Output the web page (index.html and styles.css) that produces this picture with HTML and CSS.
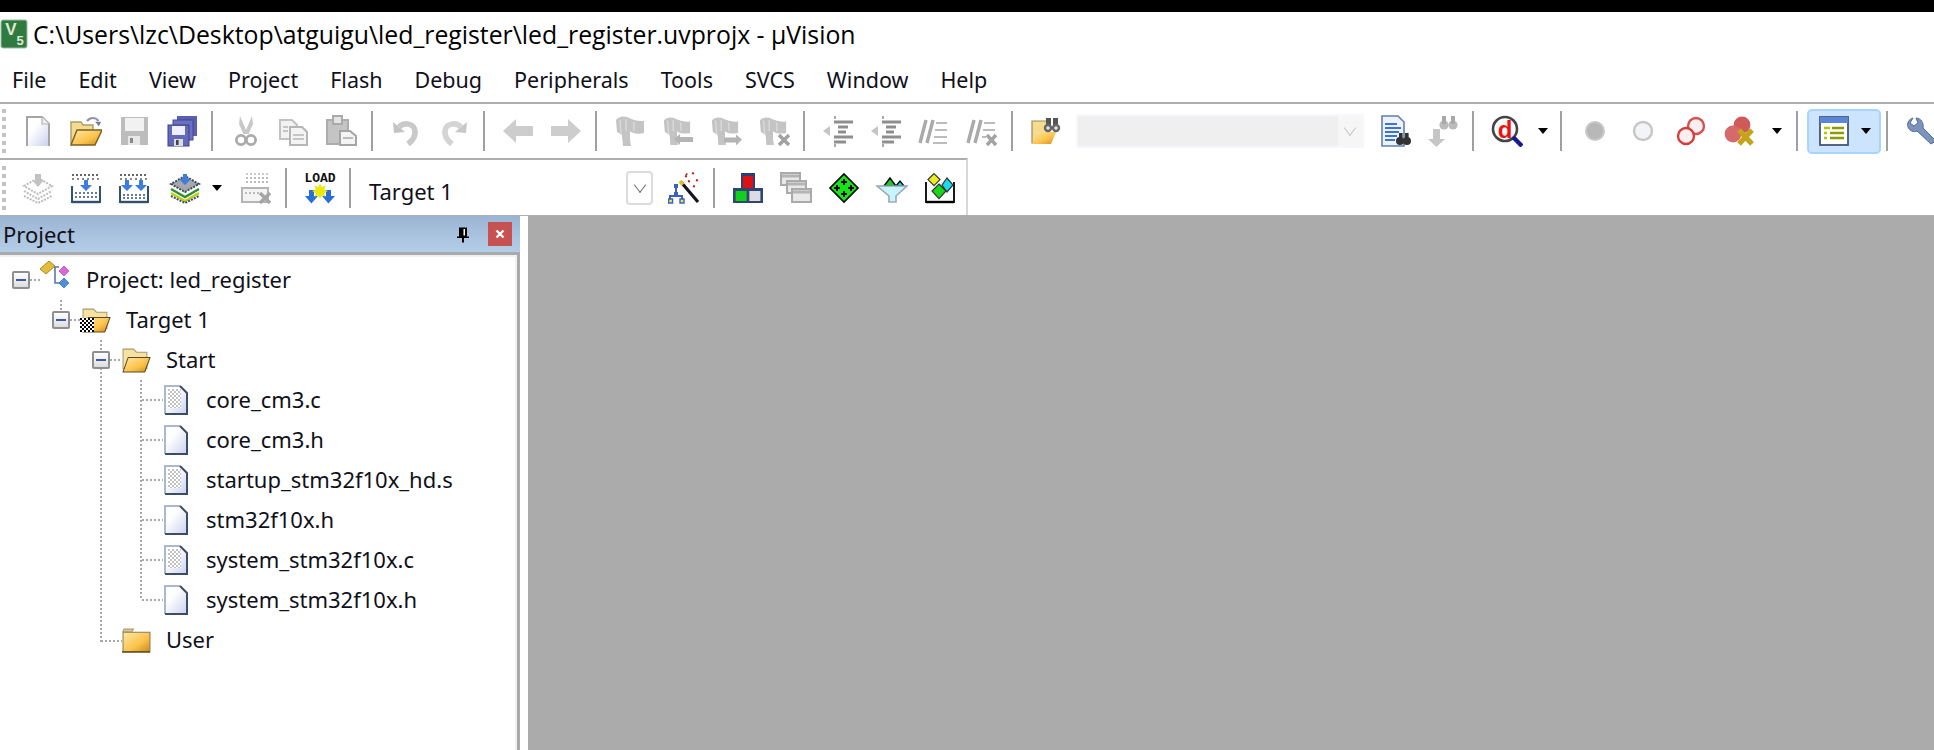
FILE: index.html
```html
<!DOCTYPE html>
<html lang="en">
<head>
  <meta charset="UTF-8">
  <title>led_register.uvprojx - µVision</title>
  <link rel="stylesheet" href="styles.css">
</head>
<body>
  <!-- shared icons, 16 unit grid like the original bitmaps -->
  <svg class="icon-defs" xmlns="http://www.w3.org/2000/svg">
    <defs>
      <linearGradient id="g-page" x1="0" y1="0" x2="1" y2="1"><stop offset=".35" stop-color="#fff"/><stop offset="1" stop-color="#c9d0ee"/></linearGradient>
      <linearGradient id="g-folder" x1="0" y1="0" x2="1" y2="1"><stop offset="0" stop-color="#fde9a8"/><stop offset=".6" stop-color="#fbc24a"/><stop offset="1" stop-color="#c98a1c"/></linearGradient>

      <symbol id="i-new" viewBox="0 0 16 16"><path d="M2.500 1H10l3.500 3.500V15.500h-11z" fill="url(#g-page)"/><path d="M2.500 15.500V1H10l3.500 3.500v11" fill="none" stroke="#a5a5a5"/><path d="M10 1v3.500h3.500" fill="#eee" stroke="#b5b5b5" stroke-width=".6"/></symbol>
      <symbol id="i-open" viewBox="0 0 16 16"><path d="M.5 3.500h5l1 1.500h5v9H.5z" fill="#f3dc92" stroke="#ac9c68" stroke-width=".7"/><path d="M3.500 7.500H16L12.500 15H.5z" fill="url(#g-folder)" stroke="#7c5f22" stroke-width=".7"/><path d="M8.500 3C10 1 13 1 14.200 3" fill="none" stroke="#8f95a8" stroke-width="1.100"/><path d="M12.600 3.400h3L14.400 5.600z" fill="#6f7f9c"/></symbol>
      <symbol id="i-save" viewBox="0 0 16 16"><rect x="1.500" y="1" width="13.500" height="14" fill="#bdbdbd"/><rect x="3.500" y="1.500" width="9.500" height="6.500" fill="#f1f1f1"/><rect x="5" y="10.500" width="6" height="4.500" fill="#e8e8e8"/><rect x="6" y="11.500" width="1.500" height="2.500" fill="#888"/></symbol>
      <symbol id="i-saveall" viewBox="0 0 16 16"><rect x="5.500" y=".5" width="10" height="10" fill="#5a5fb0"/><rect x="3.500" y="2.500" width="10" height="10" fill="#6c70c0" stroke="#43468f" stroke-width=".5"/><rect x="1" y="5" width="10.500" height="10.500" fill="#6468b8" stroke="#3c3f88" stroke-width=".5"/><rect x="3" y="5.500" width="6.500" height="4.500" fill="#eef"/><rect x="4" y="12" width="4.500" height="3.500" fill="#ddd"/><rect x="5" y="12.500" width="1.300" height="2.500" fill="#444"/></symbol>
      <symbol id="i-cut" viewBox="0 0 16 16"><path d="M5 .5l3 7 3-7 .5 4-2.200 5H6.700L4.500 4.500z" fill="#c8c8c8"/><circle cx="5.500" cy="12.500" r="2.300" fill="none" stroke="#aaa" stroke-width="1.400"/><circle cx="10.500" cy="12.500" r="2.300" fill="none" stroke="#aaa" stroke-width="1.400"/></symbol>
      <symbol id="i-copy" viewBox="0 0 16 16"><path d="M1 2.500h6L9.500 5v7H1z" fill="#f2f2f2" stroke="#c2c2c2"/><path d="M6 6h6l2.500 2.500V15H6z" fill="#f4f4f4" stroke="#b5b5b5"/><path d="M7.500 10H13M7.500 12H13M2.500 6H5M2.500 8H5" stroke="#c5c5c5"/></symbol>
      <symbol id="i-paste" viewBox="0 0 16 16"><rect x=".5" y="2.500" width="10.500" height="12" fill="#c4c4c4" stroke="#adadad"/><rect x="3.500" y=".5" width="4.500" height="4" fill="#e4e4e4" stroke="#aaa"/><path d="M7 8h5l3 2.500V15H7z" fill="#f4f4f4" stroke="#a5a5a5"/><path d="M8.500 11.500h5" stroke="#bbb"/></symbol>
      <symbol id="i-undo" viewBox="0 0 16 16"><path d="M4.500 6C7 3.500 12 4 12.500 8c.3 2.500-1.500 5-3.500 6.500" fill="none" stroke="#c9c9c9" stroke-width="2.800"/><path d="M1.500 3.500L2 9l5.500-.5z" fill="#c4c4c4"/></symbol>
      <symbol id="i-redo" viewBox="0 0 16 16"><path d="M11.500 6C9 3.500 4 4 3.500 8c-.3 2.500 1.500 5 3.500 6.500" fill="none" stroke="#d4d4d4" stroke-width="2.800"/><path d="M14.500 3.500L14 9l-5.500-.5z" fill="#c8c8c8"/></symbol>
      <symbol id="i-back" viewBox="0 0 16 16"><path d="M.5 8L7 2v3.500h8.500v5H7V14z" fill="#cdcdcd"/></symbol>
      <symbol id="i-fwd" viewBox="0 0 16 16"><path d="M15.500 8L9 2v3.500H.5v5H9V14z" fill="#cdcdcd"/></symbol>
      <symbol id="i-flag" viewBox="0 0 16 16"><path d="M1 2.500C2 .8 5 .3 7 1.300c2 1 5 2 8 1.700v6c-2 .8-5 .3-7-.8V12l.5 3.500h-4L4 10 1.500 8.500z" fill="#c4c4c4"/><path d="M3 2.500l.5 7M6 2V8M10 3.500V8" stroke="#d8d8d8" stroke-width=".8"/></symbol>
      <symbol id="i-flagl" viewBox="0 0 16 16"><use href="#i-flag" width="15" height="16"/><path d="M6 12l3-2.500V11h6.500v2.500H9V15z" fill="#b4b4b4"/></symbol>
      <symbol id="i-flagr" viewBox="0 0 16 16"><use href="#i-flag" width="15" height="16"/><path d="M16 12.300l-3-2.500v1.500H7v2.500h6v1.500z" fill="#b4b4b4"/></symbol>
      <symbol id="i-flagx" viewBox="0 0 16 16"><use href="#i-flag" width="15" height="16"/><path d="M10.500 10l5 5M15.500 10l-5 5" stroke="#a2a2a2" stroke-width="1.800"/></symbol>
      <symbol id="i-indent" viewBox="0 0 16 16"><path d="M6 3.500h9.500M8 6h5M8 8.500h4M6 11h9.500M6 13.500h6" stroke="#8e8e8e" stroke-width="1.500"/><path d="M.5 8L4 5.500v5z" fill="#c5c5c5"/><path d="M6.500 .5V2M6.500 14.500V16" stroke="#aaa"/></symbol>
      <symbol id="i-comment" viewBox="0 0 16 16"><path d="M1 14L4 2.500M4.500 14L7.500 2.500" stroke="#aaa" stroke-width="1.700"/><path d="M9 4h5.500M8.500 7.500h6M8 11h6.500M7.500 14h7" stroke="#bcbcbc"/></symbol>
      <symbol id="i-uncomment" viewBox="0 0 16 16"><path d="M1 14L4 2.500M4.500 14L7.500 2.500" stroke="#aaa" stroke-width="1.700"/><path d="M9 4h5.500M8.500 7.500h6M8 11h2" stroke="#bcbcbc"/><path d="M10.500 10l4.500 5M15 10l-4.500 5" stroke="#a4a4a4" stroke-width="1.700"/></symbol>
      <symbol id="i-findfolder" viewBox="0 0 16 16"><path d="M1 3h8v11H1z" fill="#f4dc8c" stroke="#9c8c5c" stroke-width=".6"/><path d="M3.500 8.500H13L10.500 14.500H1z" fill="url(#g-folder)"/><path d="M8 1.500h2.500V6H8zM11.500 1.500H14V6h-2.500z" fill="#555"/><circle cx="9" cy="6.500" r="2.100" fill="#666"/><circle cx="13" cy="6.500" r="2.100" fill="#666"/><circle cx="9" cy="6.500" r=".9" fill="#e4e4e4"/><circle cx="13" cy="6.500" r=".9" fill="#e4e4e4"/></symbol>
      <symbol id="i-finddoc" viewBox="0 0 16 16"><path d="M1.500 .5h8l3 3v12h-11z" fill="#eef2fb" stroke="#5f7fae" stroke-width=".8"/><path d="M3 4.500h6M3 6.500h8M3 8.500h7M3 10.500h6M3 12.500h5" stroke="#3b73d6"/><circle cx="10.500" cy="13" r="2" fill="#333"/><circle cx="14" cy="13" r="2" fill="#333"/><rect x="10" y="9" width="1.800" height="3" fill="#333"/><rect x="13" y="9" width="1.800" height="3" fill="#333"/></symbol>
      <symbol id="i-finddown" viewBox="0 0 16 16"><path d="M3 7h3.500v5H9l-4.300 4L.5 12H3z" fill="#c6c6c6"/><circle cx="8.500" cy="5" r="2.300" fill="#bbb"/><circle cx="13" cy="5" r="2.300" fill="#bbb"/><rect x="7.500" y=".5" width="2" height="4" fill="#a8a8a8"/><rect x="12" y=".5" width="2" height="4" fill="#a8a8a8"/></symbol>
      <symbol id="i-debug" viewBox="0 0 16 16"><circle cx="7" cy="7" r="6" fill="#fff" stroke="#444" stroke-width="1.300"/><text x="7" y="11.500" class="svg-d" text-anchor="middle">d</text><path d="M11 11l4.500 4.500" stroke="#1a1a90" stroke-width="2.200"/></symbol>
      <symbol id="i-dot" viewBox="0 0 16 16"><circle cx="8" cy="8" r="4.500" fill="#b8b8b8" stroke="#c8c8c8"/></symbol>
      <symbol id="i-ring" viewBox="0 0 16 16"><circle cx="8" cy="8" r="4.500" fill="#f2f4f8" stroke="#c6c6c6" stroke-width="1.200"/></symbol>
      <symbol id="i-rings" viewBox="0 0 16 16"><circle cx="10.500" cy="5.500" r="4" fill="#fbeeee" stroke="#d75050" stroke-width="1.200"/><circle cx="5.500" cy="10.500" r="4" fill="#fbf0f0" stroke="#d23f3f" stroke-width="1.200"/></symbol>
      <symbol id="i-ringsx" viewBox="0 0 16 16"><circle cx="9.500" cy="5" r="4.200" fill="#cf5a5a"/><circle cx="5" cy="9.500" r="4.200" fill="#d66a6a"/><path d="M8 7.500l6.500 7M14.500 7.500L8 14.500" stroke="#c6a418" stroke-width="2.600"/></symbol>
      <symbol id="i-window" viewBox="0 0 16 16"><rect x="1" y="1" width="14" height="14" fill="#fff" stroke="#445577" stroke-width=".9"/><rect x="1" y="1" width="14" height="3" fill="#5a86d8"/><path d="M3 6.500h3M3 9h1.500M3 11.500h1.500" stroke="#b9c400" stroke-width="1.200"/><path d="M6 9h7M6 11.500h7M7 6.500h6" stroke="#8f9a00" stroke-width="1.200"/></symbol>
      <symbol id="i-wrench" viewBox="0 0 16 16"><path d="M4 1.500C2 2 .8 4 1.500 6s3 2.800 4.500 2l7 6.500 2.500-1.500L9 6.500C9.500 4 8 1.500 5.500 1.500L6.500 4 4.500 5.500 2.500 4z" fill="#7b93bd" stroke="#566a92" stroke-width=".5"/></symbol>

      <symbol id="i-translate" viewBox="0 0 16 16"><g fill="none" stroke="#bdbdbd" stroke-dasharray="1 .6"><path d="M1 7l7-4 7 4-7 4z"/><path d="M1 9.500l7 4 7-4M1 12l7 3.500 7-3.500"/></g><path d="M6.500 1h3v3H11L8 7.500 5 4h1.500z" fill="#c2c2c2"/></symbol>
      <symbol id="i-build" viewBox="0 0 16 16"><path d="M1 1.500h14" stroke="#666" stroke-dasharray="1 1"/><path d="M1 3.500h14" stroke="#888" stroke-dasharray="1 1.500"/><path d="M1 7v8h14V7" fill="#fff" stroke="#34506f"/><path d="M1 15h14" stroke="#34506f" stroke-width="1.200"/><path d="M2.500 10.500h11M2.500 12.500h11" stroke="#667b95" stroke-dasharray="1 1"/><path d="M7 4h2v2.500h2L8 9.500 5 6.500h2z" fill="#3d7de0"/></symbol>
      <symbol id="i-rebuild" viewBox="0 0 16 16"><path d="M1 1.500h14" stroke="#666" stroke-dasharray="1 1"/><path d="M1 3.500h14" stroke="#888" stroke-dasharray="1 1.500"/><path d="M1 7v8h14V7" fill="#fff" stroke="#34506f"/><path d="M1 15h14" stroke="#34506f" stroke-width="1.200"/><path d="M2.500 11.500h11M2.500 13h11" stroke="#667b95" stroke-dasharray="1 1"/><path d="M3.500 4h2v2.500h2L4.500 9.500 1.500 6.500h2zM10.500 4h2v2.500h2l-3 3-3-3h2z" fill="#3d7de0"/></symbol>
      <symbol id="i-batch" viewBox="0 0 16 16"><path d="M1 6l7 4 7-4-7-4z" fill="#a8a8a8" stroke="#3a4c62" stroke-dasharray="1 .6"/><path d="M1 8.500l7 4 7-4" fill="none" stroke="#2f8f2f" stroke-width="1.200"/><path d="M1 10.500l7 4 7-4" fill="none" stroke="#c6cc10" stroke-width="1.200"/><path d="M1 12l7 3.500 7-3.500" fill="none" stroke="#34506f" stroke-dasharray="1 .6"/><path d="M7 1h2v2.500h2L8 6.500 5 3.500h2z" fill="#3d7de0"/></symbol>
      <symbol id="i-stop" viewBox="0 0 16 16"><path d="M3 1h11" stroke="#ccc" stroke-dasharray="1 1"/><path d="M3 3h11M3 5h11" stroke="#bbb" stroke-dasharray="1 1"/><path d="M1 8v7h13V8z" fill="#f4f4f4" stroke="#b4b4b4"/><path d="M2.500 10.500h8" stroke="#bbb" stroke-dasharray="1 1"/><path d="M10 10.500l5 5M15 10.500l-5 5" stroke="#a5a5a5" stroke-width="1.700"/></symbol>
      <symbol id="i-load" viewBox="0 0 16 16"><text x="8" y="5" class="svg-load" text-anchor="middle">LOAD</text><path d="M2.500 9H5v3h2l-3.300 3.800L.5 12h2zM11 9h2.500v3h2l-3.300 3.800L9 12h2z" fill="#2a6fd8"/><path d="M8 5.800l1 1.700 1.800-.7-.7 1.800 1.700 1-1.700 1 .7 1.800-1.800-.7-1 1.700-1-1.700-1.800.7.700-1.800-1.700-1 1.700-1-.7-1.800 1.800.7z" fill="#eaea10"/></symbol>
      <symbol id="i-wizard" viewBox="0 0 16 16"><path d="M6.500 5L15 15" stroke="#15151f" stroke-width="1.600"/><path d="M6 4.500l1.500 1.800" stroke="#e0c020" stroke-width="1.800"/><path d="M8.500 2l1 .3M12 .5l1 .3M10 4.500l1 .3M14 4l1 .3M12.500 7l1 .3M9 .8l.6.6" stroke="#b02020"/><path d="M4 7v5M1 15v-3h6v3" fill="none" stroke="#3a60c0"/><path d="M3 6h2v2H3zM3 10h2v2H3z" fill="#3a60c0"/><path d="M.3 13.500h2v2h-2zM6 13.500h2v2H6z" fill="#f2e54a" stroke="#3a60c0" stroke-width=".7"/></symbol>
      <symbol id="i-rte" viewBox="0 0 16 16"><rect x="4.500" y=".5" width="7" height="7.500" fill="#2a3f7a"/><rect x="5.500" y="2" width="5" height="6" fill="#e01010"/><rect x=".5" y="8" width="15" height="7.500" fill="#30456f"/><rect x="1.800" y="9.500" width="5.500" height="5" fill="#12d01a"/><rect x="8.700" y="9.500" width="5.500" height="5" fill="#dcdce4"/></symbol>
      <symbol id="i-windows" viewBox="0 0 16 16"><g fill="#e8e8e8" stroke="#aaa"><rect x=".5" y=".5" width="9.500" height="6"/><rect x="3.500" y="4.500" width="9.500" height="6"/><rect x="6" y="8.500" width="9.500" height="6.500"/></g><path d="M1 2h8.500M4 6h8.500M6.500 10H15" stroke="#b4b4b4" stroke-width="1.500"/></symbol>
      <symbol id="i-diamond" viewBox="0 0 16 16"><path d="M8 1l7 7-7 7-7-7z" fill="#12e812" stroke="#000" stroke-width=".8"/><path d="M8 3.500v3M6.500 5h3M4.500 6.500v3M3 8h3M11.500 6.500v3M10 8h3M8 9.500v3M6.500 11h3" stroke="#000"/></symbol>
      <symbol id="i-funnel" viewBox="0 0 16 16"><path d="M4 7l3-4 3 4z" fill="#12d020" stroke="#000" stroke-width=".7"/><path d="M10 7l2-2.500L14 7z" fill="#18e0f0" stroke="#000" stroke-width=".7"/><path d="M.5 7h15L10 12v3H6.500v-3z" fill="#c8f4fb" stroke="#9aa8b4" stroke-width=".8"/></symbol>
      <symbol id="i-book" viewBox="0 0 16 16"><path d="M1 5v10h14V5" fill="#fff" stroke="#000" stroke-width=".9"/><path d="M1 15h14" stroke="#000" stroke-width="1.200"/><path d="M5 .8l3 3-3 3-3-3z" fill="#ecec20" stroke="#333" stroke-width=".6"/><path d="M11.500 3l3 3.500-3 3.500L9 6.500z" fill="#18dcf0" stroke="#333" stroke-width=".6"/><path d="M7.500 6L11 9.500l-3.500 3.800L4 9.500z" fill="#18d818" stroke="#333" stroke-width=".6"/></symbol>

      <symbol id="i-project" viewBox="0 0 30 30"><path d="M13 6h6M15 6v16h6" fill="none" stroke="#5a78a8" stroke-width="1.600"/><path d="M0 8l9-8 6 5-9 8z" fill="#e4bb3c" stroke="#a98a20"/><path d="M19 10l5-5 5 5-5 5z" fill="#dd66dd" stroke="#a040a0" stroke-dasharray="1 .5"/><path d="M19 22l5-5 5 5-5 5z" fill="#4a90dc" stroke="#2a60b0" stroke-dasharray="1 .5"/></symbol>
      <symbol id="i-folderopen" viewBox="0 0 28 24"><path d="M1 1h10l3 3h10v16H1z" fill="#f5e2a2" stroke="#a89a70"/><path d="M6 9h21l-5 14H1z" fill="url(#g-folder)" stroke="#5e4a22"/></symbol>
      <symbol id="i-folder" viewBox="0 0 28 24"><path d="M1 3h9l1-2H2z" fill="#eadca8" stroke="#a89a70"/><path d="M1 4h26v19H1z" fill="url(#g-folder)" stroke="#8c7c4c"/><path d="M0 23h27" stroke="#5e4a22" stroke-width="1.400"/></symbol>
      <symbol id="i-file" viewBox="0 0 24 30"><path d="M1 1h15l7 7v21H1z" fill="url(#g-page)"/><path d="M1 29V1h15" fill="none" stroke="#a7b8d0" stroke-width="2"/><path d="M16 1l7 7v21H1" fill="none" stroke="#3c4d68" stroke-width="2"/></symbol>
      <pattern id="p-check" width="4" height="4" patternUnits="userSpaceOnUse"><rect width="4" height="4" fill="#fff"/><rect width="2" height="2" fill="#c4c4c4"/><rect x="2" y="2" width="2" height="2" fill="#c4c4c4"/></pattern>
      <pattern id="p-target" width="4" height="4" patternUnits="userSpaceOnUse"><rect width="4" height="4" fill="#fff"/><rect width="2" height="2" fill="#000"/><rect x="2" y="2" width="2" height="2" fill="#000"/></pattern>
      <symbol id="i-filec" viewBox="0 0 24 30"><use href="#i-file" width="24" height="30"/><rect x="4" y="4" width="13" height="19" fill="url(#p-check)"/></symbol>
    </defs>
  </svg>

  <div class="app">
    <header class="titlebar">
      <svg class="app-icon" viewBox="0 0 28 30">
        <rect x="1" y="1" width="26" height="28" rx="2" fill="#2f7a3e" stroke="#9dbda5"/>
        <text x="11" y="16" class="svg-logo">V</text>
        <text x="20" y="26" class="svg-logo-small">5</text>
      </svg>
      <span class="title-text">C:\Users\lzc\Desktop\atguigu\led_register\led_register.uvprojx - µVision</span>
    </header>

    <nav class="menubar">
      <span>File</span><span>Edit</span><span>View</span><span>Project</span><span>Flash</span><span>Debug</span><span>Peripherals</span><span>Tools</span><span>SVCS</span><span>Window</span><span>Help</span>
    </nav>

    <div class="toolbar">
      <span class="grip"></span>
      <span class="tool"><svg class="ic"><use href="#i-new"/></svg></span>
      <span class="tool"><svg class="ic"><use href="#i-open"/></svg></span>
      <span class="tool"><svg class="ic"><use href="#i-save"/></svg></span>
      <span class="tool"><svg class="ic"><use href="#i-saveall"/></svg></span>
      <span class="sep"></span>
      <span class="tool"><svg class="ic"><use href="#i-cut"/></svg></span>
      <span class="tool"><svg class="ic"><use href="#i-copy"/></svg></span>
      <span class="tool"><svg class="ic"><use href="#i-paste"/></svg></span>
      <span class="sep"></span>
      <span class="tool"><svg class="ic"><use href="#i-undo"/></svg></span>
      <span class="tool"><svg class="ic"><use href="#i-redo"/></svg></span>
      <span class="sep"></span>
      <span class="tool"><svg class="ic"><use href="#i-back"/></svg></span>
      <span class="tool"><svg class="ic"><use href="#i-fwd"/></svg></span>
      <span class="sep"></span>
      <span class="tool"><svg class="ic"><use href="#i-flag"/></svg></span>
      <span class="tool"><svg class="ic"><use href="#i-flagl"/></svg></span>
      <span class="tool"><svg class="ic"><use href="#i-flagr"/></svg></span>
      <span class="tool"><svg class="ic"><use href="#i-flagx"/></svg></span>
      <span class="sep"></span>
      <span class="tool"><svg class="ic"><use href="#i-indent"/></svg></span>
      <span class="tool"><svg class="ic"><use href="#i-indent"/></svg></span>
      <span class="tool"><svg class="ic"><use href="#i-comment"/></svg></span>
      <span class="tool"><svg class="ic"><use href="#i-uncomment"/></svg></span>
      <span class="sep"></span>
      <span class="tool"><svg class="ic"><use href="#i-findfolder"/></svg></span>
      <span class="find-box"><span class="find-btn"><i class="chevron light"></i></span></span>
      <span class="tool after-box"><svg class="ic"><use href="#i-finddoc"/></svg></span>
      <span class="tool"><svg class="ic"><use href="#i-finddown"/></svg></span>
      <span class="sep"></span>
      <span class="tool"><svg class="ic"><use href="#i-debug"/></svg></span>
      <span class="drop-slot"><i class="drop"></i></span>
      <span class="sep"></span>
      <span class="tool"><svg class="ic"><use href="#i-dot"/></svg></span>
      <span class="tool"><svg class="ic"><use href="#i-ring"/></svg></span>
      <span class="tool"><svg class="ic"><use href="#i-rings"/></svg></span>
      <span class="tool"><svg class="ic"><use href="#i-ringsx"/></svg></span>
      <span class="drop-slot wide"><i class="drop"></i></span>
      <span class="sep"></span>
      <span class="tool-active"><svg class="ic"><use href="#i-window"/></svg><i class="drop"></i></span>
      <span class="sep"></span>
      <span class="tool"><svg class="ic"><use href="#i-wrench"/></svg></span>
    </div>

    <div class="toolbar second">
      <span class="grip"></span>
      <span class="tool"><svg class="ic"><use href="#i-translate"/></svg></span>
      <span class="tool"><svg class="ic"><use href="#i-build"/></svg></span>
      <span class="tool"><svg class="ic"><use href="#i-rebuild"/></svg></span>
      <span class="tool batch"><svg class="ic"><use href="#i-batch"/></svg></span>
      <span class="drop-slot narrow"><i class="drop"></i></span>
      <span class="tool stop"><svg class="ic"><use href="#i-stop"/></svg></span>
      <span class="sep"></span>
      <span class="tool"><svg class="ic"><use href="#i-load"/></svg></span>
      <span class="sep"></span>
      <span class="target-select"><span class="target-name">Target 1</span><span class="target-btn"><i class="chevron"></i></span></span>
      <span class="tool after-box"><svg class="ic"><use href="#i-wizard"/></svg></span>
      <span class="sep"></span>
      <span class="tool"><svg class="ic"><use href="#i-rte"/></svg></span>
      <span class="tool"><svg class="ic"><use href="#i-windows"/></svg></span>
      <span class="tool"><svg class="ic"><use href="#i-diamond"/></svg></span>
      <span class="tool"><svg class="ic"><use href="#i-funnel"/></svg></span>
      <span class="tool"><svg class="ic"><use href="#i-book"/></svg></span>
    </div>

    <main class="workarea">
      <section class="panel">
        <div class="panel-head">
          <span>Project</span>
          <svg class="pin" viewBox="0 0 14 16"><path d="M3 1h8v9H3zM1 10h12v1.500H1zM6 11.500h2V16H6z" fill="#000"/><rect x="7.500" y="2.500" width="1.500" height="6.500" fill="#fff"/></svg>
          <span class="close-btn"><svg viewBox="0 0 10 10"><path d="M1.500 1.500l7 7M8.500 1.500l-7 7" stroke="#fff" stroke-width="2.400"/></svg></span>
        </div>
        <div class="panel-body">
          <div class="tree">
            <!-- dotted tree guides, drawn over the rows -->
            <svg class="guides" width="500" height="400">
              <path d="M30 25H40M61 45V57M70 65H80M101 85V97M101 113V387M110 105H120M141 125V345M142 145H163M142 185H163M142 225H163M142 265H163M142 305H163M142 345H163M101 386H122"/>
            </svg>
            <div class="row lv0"><span class="exp"></span><span class="node"><svg class="node-project"><use href="#i-project"/></svg></span><span>Project: led_register</span></div>
            <div class="row lv1"><span class="exp"></span><span class="node"><svg class="node-folder"><use href="#i-folderopen"/></svg><svg class="target-mark" viewBox="0 0 14 14"><rect width="14" height="14" fill="url(#p-target)"/></svg></span><span>Target 1</span></div>
            <div class="row lv2"><span class="exp"></span><span class="node"><svg class="node-folder"><use href="#i-folderopen"/></svg></span><span>Start</span></div>
            <div class="row lv3"><span class="exp none"></span><span class="node"><svg class="node-file"><use href="#i-filec"/></svg></span><span>core_cm3.c</span></div>
            <div class="row lv3"><span class="exp none"></span><span class="node"><svg class="node-file"><use href="#i-file"/></svg></span><span>core_cm3.h</span></div>
            <div class="row lv3"><span class="exp none"></span><span class="node"><svg class="node-file"><use href="#i-filec"/></svg></span><span>startup_stm32f10x_hd.s</span></div>
            <div class="row lv3"><span class="exp none"></span><span class="node"><svg class="node-file"><use href="#i-file"/></svg></span><span>stm32f10x.h</span></div>
            <div class="row lv3"><span class="exp none"></span><span class="node"><svg class="node-file"><use href="#i-filec"/></svg></span><span>system_stm32f10x.c</span></div>
            <div class="row lv3"><span class="exp none"></span><span class="node"><svg class="node-file"><use href="#i-file"/></svg></span><span>system_stm32f10x.h</span></div>
            <div class="row lv2"><span class="exp none"></span><span class="node"><svg class="node-folder"><use href="#i-folder"/></svg></span><span>User</span></div>
          </div>
        </div>
      </section>
      <div class="gutter"></div>
      <div class="workspace"></div>
    </main>
  </div>
</body>
</html>
```

FILE: styles.css
```css
html, body {
  margin: 0;
  padding: 0;
  height: 100%;
  overflow: hidden;
  background: #fff;
}
body {
  font-family: "Noto Sans", sans-serif;
  font-size: 22px;
  color: #10101a;
}
.icon-defs {
  position: absolute;
  width: 0;
  height: 0;
}
.app {
  display: flex;
  flex-direction: column;
  height: 750px;
  border-top: 12px solid #000;
  box-sizing: border-box;
}

/* title + menu */
.titlebar {
  display: flex;
  align-items: center;
  height: 43px;
  flex: none;
}
.app-icon {
  width: 28px;
  height: 30px;
  margin: 0 5px 0 0;
  flex: none;
}
.title-text {
  font-family: "Open Sans", sans-serif;
  font-size: 24.8px;
  color: #000;
  white-space: nowrap;
}
.menubar {
  display: flex;
  align-items: center;
  gap: 32px;
  box-sizing: border-box;
  height: 47px;
  padding: 2px 0 0 12px;
  flex: none;
  font-size: 21.5px;
}

/* toolbars */
.toolbar {
  display: flex;
  align-items: center;
  height: 54px;
  flex: none;
  border-top: 2px solid #aeaeae;
  overflow: hidden;
}
.toolbar.second {
  width: 966px;
  height: 55px;
  border-right: 2px solid #d8d8d8;
  overflow: visible;
}
.grip {
  width: 4px;
  height: 44px;
  margin: 0 8px 0 2px;
  flex: none;
  background: repeating-linear-gradient(to bottom, #c2c2c2 0 4px, transparent 4px 8px);
}
.tool {
  display: flex;
  align-items: center;
  justify-content: center;
  width: 48px;
  flex: none;
}
.tool.after-box { margin-left: 7px; }
.tool.batch { width: 54px; }
.tool.stop { margin-left: 10px; }
.ic {
  width: 32px;
  height: 32px;
  flex: none;
}
.sep {
  width: 2px;
  height: 40px;
  margin: 0 9px 0 5px;
  flex: none;
  background: #a0a0a0;
}
.drop {
  display: block;
  width: 0;
  height: 0;
  border-top: 6px solid #000;
  border-left: 5px solid transparent;
  border-right: 5px solid transparent;
}
.drop-slot {
  display: flex;
  justify-content: center;
  width: 24px;
  flex: none;
}
.drop-slot.wide { width: 28px; }
.drop-slot.narrow { width: 10px; }
.tool-active {
  display: flex;
  align-items: center;
  gap: 11px;
  box-sizing: border-box;
  width: 74px;
  height: 45px;
  padding-left: 9px;
  flex: none;
  background: #cce4fd;
  border: 2px solid #a8d4ff;
  border-radius: 5px;
}
.find-box {
  display: flex;
  justify-content: flex-end;
  box-sizing: border-box;
  width: 288px;
  height: 34px;
  margin-left: 6px;
  flex: none;
  background: #efefef;
  border: 2px solid #f6f6fb;
}
.find-btn {
  display: flex;
  align-items: center;
  justify-content: center;
  width: 24px;
  background: #f6f6f6;
}
.chevron {
  display: block;
  width: 9px;
  height: 9px;
  margin-top: -6px;
  border-right: 1.500px solid #666;
  border-bottom: 1.500px solid #666;
  transform: rotate(45deg) skew(8deg, 8deg);
}
.chevron.light {
  border-color: #c4c4c4;
}
.target-select {
  display: flex;
  align-items: center;
  justify-content: space-between;
  box-sizing: border-box;
  width: 293px;
  padding-left: 9px;
  flex: none;
}
.target-name {
  padding-top: 7px;
}
.target-btn {
  display: flex;
  align-items: center;
  justify-content: center;
  box-sizing: border-box;
  width: 27px;
  height: 34px;
  border: 2px solid #dcdcdc;
  border-radius: 4px;
}

/* project panel */
.workarea {
  display: flex;
  flex: 1;
  min-height: 0;
  border-top: 1px solid #aeaeae;
}
.panel {
  display: flex;
  flex-direction: column;
  width: 520px;
  flex: none;
}
.panel-head {
  display: flex;
  align-items: center;
  height: 36px;
  padding-left: 3px;
  flex: none;
  background: linear-gradient(to bottom, #9bb4d3, #b5cee7);
}
.pin {
  width: 14px;
  height: 17px;
  margin-left: auto;
}
.close-btn {
  display: flex;
  align-items: center;
  justify-content: center;
  width: 24px;
  height: 24px;
  margin: 0 8px 0 18px;
  background: #c75050;
}
.close-btn svg {
  width: 10px;
  height: 10px;
}
.panel-body {
  flex: 1;
  border-top: 3px solid #aaa;
  border-right: 3px solid #aaa;
  box-shadow: inset 0 2px 0 #f0f0f0, inset -2px 0 0 #f0f0f0;
  min-height: 0;
}
.tree {
  position: relative;
  padding-top: 5px;
}
.guides {
  position: absolute;
  top: 0;
  left: 0;
}
.guides path {
  fill: none;
  stroke: #a8a8a8;
  stroke-width: 2;
  stroke-dasharray: 2 2;
}
.row {
  display: flex;
  align-items: center;
  position: relative;
  height: 40px;
  white-space: nowrap;
}
.row > span:last-child {
  margin-top: -2px;
}
.lv0 { padding-left: 12px; }
.lv1 { padding-left: 52px; }
.lv2 { padding-left: 92px; }
.lv3 { padding-left: 132px; }
.exp {
  position: relative;
  box-sizing: border-box;
  width: 18px;
  height: 18px;
  margin-right: 10px;
  flex: none;
  background: linear-gradient(to bottom, #fff, #dcdcdc);
  border: 2px solid #8f8f8f;
  border-radius: 2px;
}
.exp::after {
  content: "";
  position: absolute;
  left: 2px;
  right: 2px;
  top: 6px;
  height: 2px;
  background: #3c5aa0;
}
.exp.none {
  visibility: hidden;
}
.node {
  position: relative;
  display: flex;
  align-items: center;
  justify-content: center;
  width: 32px;
  height: 40px;
  margin-right: 14px;
  flex: none;
}
.node-file {
  width: 24px;
  height: 30px;
}
.node-folder {
  width: 29px;
  height: 25px;
}
.node-project {
  width: 30px;
  height: 30px;
  margin: -8px 2px 0 0;
}
.target-mark {
  position: absolute;
  left: 0;
  top: 18px;
  width: 14px;
  height: 14px;
}

.gutter {
  width: 8px;
  flex: none;
}
.workspace {
  flex: 1;
  background: #ababab;
}

/* text inside svg icons */
.svg-d {
  font-family: "Liberation Sans", sans-serif;
  font-size: 12px;
  font-weight: bold;
  fill: #f01010;
}
.svg-load {
  font-family: "Liberation Mono", monospace;
  font-size: 6.500px;
  font-weight: bold;
  fill: #111;
}
.svg-logo {
  font-family: "Liberation Sans", sans-serif;
  font-size: 17px;
  font-weight: bold;
  fill: #dfe9d8;
  text-anchor: middle;
}
.svg-logo-small {
  font-family: "Liberation Sans", sans-serif;
  font-size: 13px;
  font-weight: bold;
  fill: #dfe9d8;
  text-anchor: middle;
}
```
